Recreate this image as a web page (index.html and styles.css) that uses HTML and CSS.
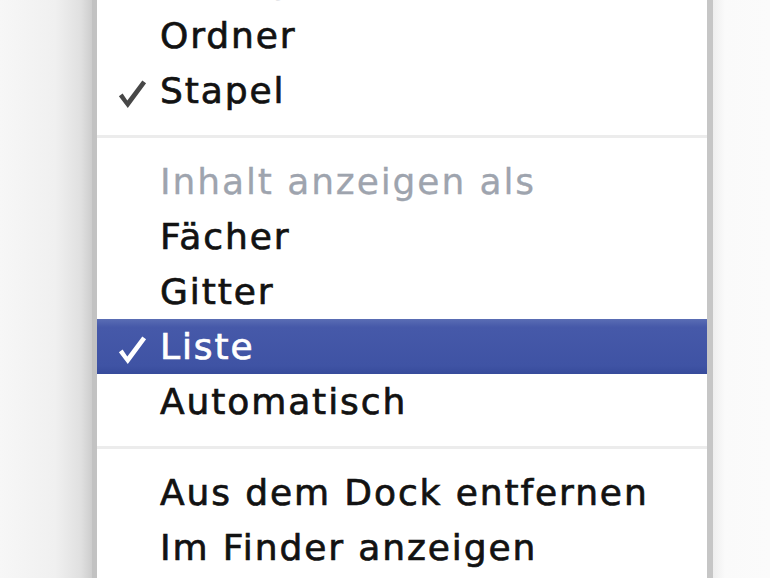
FILE: index.html
```html
<!DOCTYPE html>
<html lang="de">
<head>
<meta charset="utf-8">
<title>Dock-Menü</title>
<link rel="stylesheet" href="styles.css">
</head>
<body>
<div class="screen">
  <div class="side side-left"></div>
  <div class="menu">
    <div class="menu-inner">
      <div class="item header">Anzeigen als</div>
      <div class="item">Ordner</div>
      <div class="item checked">
        <svg class="check" viewBox="0 0 32 32" aria-hidden="true"><path d="M2 18.5 L6 15.5 L11 23 L27 1.5 L31 4.5 L11.5 31 Z"/></svg>
        Stapel
      </div>
      <div class="sep"></div>
      <div class="item header">Inhalt anzeigen als</div>
      <div class="item">Fächer</div>
      <div class="item">Gitter</div>
      <div class="item checked selected">
        <svg class="check" viewBox="0 0 32 32" aria-hidden="true"><path d="M2 18.5 L6 15.5 L11 23 L27 1.5 L31 4.5 L11.5 31 Z"/></svg>
        Liste
      </div>
      <div class="item">Automatisch</div>
      <div class="sep"></div>
      <div class="item">Aus dem Dock entfernen</div>
      <div class="item">Im Finder anzeigen</div>
    </div>
  </div>
  <div class="side side-right"></div>
</div>
</body>
</html>
```

FILE: styles.css
```css
html, body {
  margin: 0;
  padding: 0;
  width: 770px;
  height: 578px;
  overflow: hidden;
  background: #f8f8f8;
}

.screen {
  display: flex;
  width: 770px;
  height: 578px;
}

.side {
  flex: none;
}

.side-left {
  width: 92px;
  background: linear-gradient(to right, #f7f7f7 0%, #f0f0f0 60%, #e0e0e0 88%, #cdcdcd 100%);
}

.side-right {
  flex: 1;
  background: linear-gradient(to right, #eeeeee 0px, #fafafa 12px, #fbfbfb 100%);
}

.menu {
  width: 610px;
  flex: none;
  background: #ffffff;
  border-left: 5px solid #c2c2c2;
  border-right: 6px solid #c6c6c6;
  overflow: hidden;
}

.menu-inner {
  margin-top: -47px;
  display: flex;
  flex-direction: column;
}

.item {
  position: relative;
  height: 55px;
  display: flex;
  align-items: center;
  padding-left: 63px;
  font-family: "DejaVu Sans", "Liberation Sans", sans-serif;
  font-size: 36px;
  letter-spacing: 1.9px;
  -webkit-text-stroke: 0.7px currentColor;
  color: #121212;
  white-space: nowrap;
}

.item.header {
  color: #9ea4ae;
  -webkit-text-stroke: 0.3px currentColor;
}

.item.selected {
  background: linear-gradient(to bottom, #5a6db4 0%, #4659a9 15%, #3f53a4 85%, #374b9b 100%);
  color: #ffffff;
}

.check {
  position: absolute;
  left: 20px;
  top: 16px;
  width: 30px;
  height: 30px;
  fill: #474747;
}

.selected .check {
  fill: #ffffff;
}

.sep {
  height: 36px;
  display: flex;
  align-items: center;
}

.sep::before {
  content: "";
  display: block;
  width: 100%;
  height: 3px;
  background: #ececec;
}
```
